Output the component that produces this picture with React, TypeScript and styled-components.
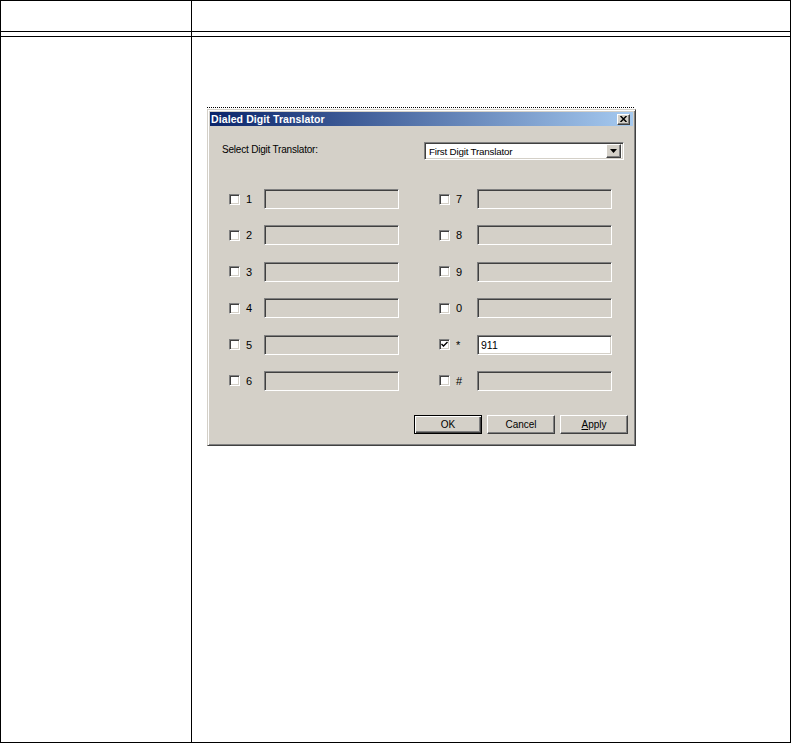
import React from "react";
import styled, { createGlobalStyle, css } from "styled-components";

const GlobalStyle = createGlobalStyle`
  html, body { margin: 0; padding: 0; background: #fff; }
  body { font-family: "Liberation Sans", Arial, sans-serif; }
`;

const Table = styled.div`
  width: 791px;
  height: 743px;
  box-sizing: border-box;
  border: 1px solid #000;
  display: grid;
  grid-template-columns: 191px 1fr;
  grid-template-rows: 31px 5px 1fr;
`;

const Cell = styled.div<{ $left?: boolean; $bottom?: boolean }>`
  box-sizing: border-box;
  ${(p) => p.$left && css`border-right: 1px solid #000;`}
  ${(p) => p.$bottom && css`border-bottom: 1px solid #000;`}
`;

const ContentCell = styled(Cell)`
  padding: 70px 0 0 15px;
`;

const Shot = styled.div`
  width: 427px;
  border-top: 1px dotted #000;
  padding-top: 1px;
`;

const Dialog = styled.div`
  width: 429px;
  height: 337px;
  box-sizing: border-box;
  background: #d4d0c8;
  border: 1px solid;
  border-color: #d4d0c8 #404040 #404040 #d4d0c8;
  box-shadow: inset 1px 1px #fff, inset -1px -1px #808080;
  padding: 2px;
  display: flex;
  flex-direction: column;
  font-family: "Liberation Sans", Arial, sans-serif;
  color: #000;
`;

const TitleBar = styled.div`
  height: 14px;
  flex-shrink: 0;
  background: linear-gradient(to right, #0a246a, #a6caf0);
  display: flex;
  align-items: center;
  justify-content: space-between;
  padding: 0 3px 0 1px;
`;

const TitleText = styled.span`
  color: #fff;
  font-weight: bold;
  font-size: 10.5px;
  letter-spacing: 0.1px;
  line-height: 14px;
`;

const raised = css`
  background: #d4d0c8;
  border: 1px solid;
  border-color: #fff #404040 #404040 #fff;
  box-shadow: inset -1px -1px #808080;
`;

const sunken = css`
  border: 1px solid;
  border-color: #808080 #fff #fff #808080;
  box-shadow: inset 1px 1px #404040, inset -1px -1px #d4d0c8;
`;

const CloseButton = styled.div`
  ${raised};
  box-sizing: border-box;
  width: 13px;
  height: 11px;
  display: flex;
  align-items: center;
  justify-content: center;
`;

const Client = styled.div`
  flex: 1;
  display: flex;
  flex-direction: column;
  padding: 16px 5px 0 12px;
  font-size: 9.5px;
`;

const SelectRow = styled.div`
  display: flex;
  align-items: center;
`;

const SelectLabel = styled.span`
  width: 202px;
  flex-shrink: 0;
  margin-top: -3px;
  font-size: 10px;
  letter-spacing: -0.2px;
`;

const Dropdown = styled.div`
  ${sunken};
  box-sizing: border-box;
  width: 200px;
  height: 18px;
  background: #fff;
  display: flex;
  align-items: center;
  padding: 2px;
`;

const DropdownText = styled.span`
  flex: 1;
  padding-left: 2px;
  font-size: 9.8px;
  letter-spacing: -0.2px;
`;

const DropArrow = styled.div`
  ${raised};
  box-sizing: border-box;
  width: 15px;
  height: 14px;
  display: flex;
  align-items: center;
  justify-content: center;
`;

const DigitGrid = styled.div`
  margin: 29px 0 0 7px;
  display: grid;
  grid-template-columns: 210px 210px;
  row-gap: 16.4px;
  grid-auto-flow: column;
  grid-template-rows: repeat(6, 20px);
`;

const DigitRow = styled.div`
  display: flex;
  align-items: center;
  height: 20px;
`;

const Check = styled.div`
  ${sunken};
  box-sizing: border-box;
  width: 11px;
  height: 11px;
  background: #fff;
  display: flex;
  align-items: center;
  justify-content: center;
  flex-shrink: 0;
`;

const DigitLabel = styled.span<{ $w: number }>`
  width: ${(p) => p.$w}px;
  margin-left: 6px;
  flex-shrink: 0;
  font-size: 11px;
`;

const Field = styled.div<{ $enabled?: boolean }>`
  ${sunken};
  box-sizing: border-box;
  width: 135px;
  height: 20px;
  background: ${(p) => (p.$enabled ? "#fff" : "#d4d0c8")};
  display: flex;
  align-items: center;
  padding-left: 3px;
  font-size: 10.5px;
`;

const ButtonRow = styled.div`
  margin-top: 24px;
  display: flex;
  justify-content: flex-end;
  gap: 5px;
`;

const Button = styled.div<{ $default?: boolean }>`
  ${raised};
  box-sizing: border-box;
  width: 68px;
  height: 19px;
  display: flex;
  align-items: center;
  justify-content: center;
  font-size: 10px;
  ${(p) =>
    p.$default &&
    css`
      border: 1px solid #000;
      box-shadow: inset 1px 1px #fff, inset -1px -1px #404040, inset -2px -2px #808080;
    `}
`;

const Underline = styled.span`
  text-decoration: underline;
`;

type Digit = { label: string; checked?: boolean; value?: string };

const left: Digit[] = [
  { label: "1" },
  { label: "2" },
  { label: "3" },
  { label: "4" },
  { label: "5" },
  { label: "6" },
];
const right: Digit[] = [
  { label: "7" },
  { label: "8" },
  { label: "9" },
  { label: "0" },
  { label: "*", checked: true, value: "911" },
  { label: "#" },
];

const CheckMark = () => (
  <svg width="7" height="7" viewBox="0 0 7 7">
    <path d="M0.5 3 L2.5 5 L6.5 1" stroke="#000" strokeWidth="1.4" fill="none" />
  </svg>
);

const DigitEntry = ({ d, w }: { d: Digit; w: number }) => (
  <DigitRow>
    <Check>{d.checked && <CheckMark />}</Check>
    <DigitLabel $w={w}>{d.label}</DigitLabel>
    <Field $enabled={d.checked}>{d.value}</Field>
  </DigitRow>
);

export default function App() {
  return (
    <>
      <GlobalStyle />
      <Table>
        <Cell $left $bottom />
        <Cell $bottom />
        <Cell $left $bottom />
        <Cell $bottom />
        <Cell $left />
        <ContentCell>
          <Shot>
            <Dialog>
              <TitleBar>
                <TitleText>Dialed Digit Translator</TitleText>
                <CloseButton>
                  <svg width="7" height="6" viewBox="0 0 7 6">
                    <path d="M0.5 0 L6.5 6 M6.5 0 L0.5 6" stroke="#000" strokeWidth="1.5" />
                  </svg>
                </CloseButton>
              </TitleBar>
              <Client>
                <SelectRow>
                  <SelectLabel>Select Digit Translator:</SelectLabel>
                  <Dropdown>
                    <DropdownText>First Digit Translator</DropdownText>
                    <DropArrow>
                      <svg width="7" height="4" viewBox="0 0 7 4">
                        <path d="M0 0 L7 0 L3.5 4 Z" fill="#000" />
                      </svg>
                    </DropArrow>
                  </Dropdown>
                </SelectRow>
                <DigitGrid>
                  {left.map((d) => (
                    <DigitEntry key={d.label} d={d} w={18} />
                  ))}
                  {right.map((d) => (
                    <DigitEntry key={d.label} d={d} w={21} />
                  ))}
                </DigitGrid>
                <ButtonRow>
                  <Button $default>OK</Button>
                  <Button>Cancel</Button>
                  <Button>
                    <span>
                      <Underline>A</Underline>pply
                    </span>
                  </Button>
                </ButtonRow>
              </Client>
            </Dialog>
          </Shot>
        </ContentCell>
      </Table>
    </>
  );
}
